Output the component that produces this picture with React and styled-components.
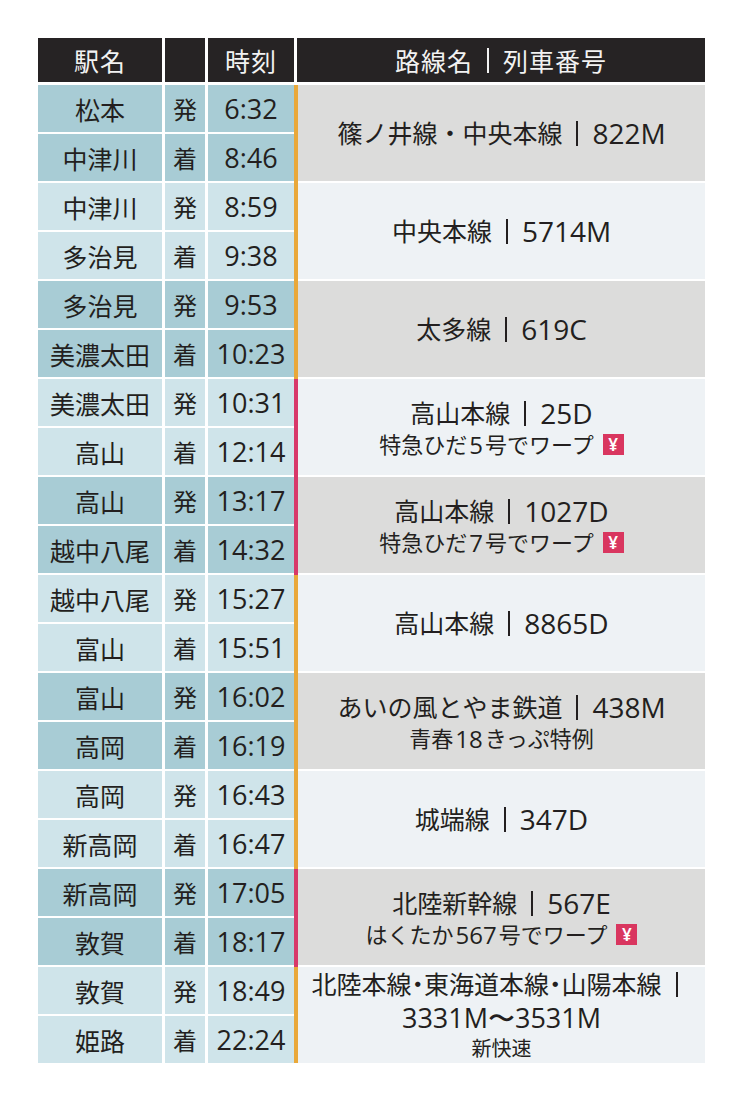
import React from 'react';
import styled, { createGlobalStyle } from 'styled-components';

const GlobalStyle = createGlobalStyle`
  html, body {
    margin: 0;
    padding: 0;
    background: #ffffff;
  }
  body {
    font-family: "Open Sans", "Noto Sans CJK JP", sans-serif;
    color: #231f20;
  }
`;

const darkTeal = '#a8ccd5';
const lightTeal = '#cfe4ea';
const greyRoute = '#dcdcdb';
const lightRoute = '#eef2f5';
const orange = '#e9a83a';
const red = '#d8386a';

const Page = styled.div`
  width: 667px;
  padding: 38px 0 0 38px;
`;

const HeaderRow = styled.div`
  display: grid;
  grid-template-columns: 124px 40px 86px 1fr;
  column-gap: 3px;
  height: 44px;
  margin-bottom: 3px;
`;

const HeaderCell = styled.div`
  background: #262324;
  color: #f2f2f2;
  font-family: "Noto Sans CJK JP", sans-serif;
  font-size: 25px;
  display: flex;
  align-items: center;
  justify-content: center;
  letter-spacing: 1px;
`;

const Group = styled.div`
  display: flex;
`;

const Stops = styled.div`
  display: grid;
  grid-template-columns: 124px 40px 86px;
  grid-template-rows: 47px 47px;
  gap: 2px 3px;
  padding-bottom: ${(p) => (p.$last ? '0' : '2px')};
  flex: none;
`;

const StopCell = styled.div`
  background: ${(p) => (p.$dark ? darkTeal : lightTeal)};
  display: flex;
  align-items: center;
  justify-content: center;
  font-family: ${(p) => (p.$time ? '"Open Sans", "Noto Sans CJK JP", sans-serif' : '"Noto Sans CJK JP", sans-serif')};
  font-size: ${(p) => p.$size || 25}px;
  white-space: nowrap;
`;

const RouteCell = styled.div`
  flex: 1;
  border-left: 4px solid ${(p) => p.$bar};
  padding-bottom: ${(p) => (p.$last ? '0' : '2px')};
  display: flex;
`;

const RouteBody = styled.div`
  flex: 1;
  background: ${(p) => (p.$dark ? greyRoute : lightRoute)};
  display: flex;
  flex-direction: column;
  align-items: center;
  justify-content: center;
  padding-top: ${(p) => p.$shift || 0}px;
`;

const MainLine = styled.div`
  font-size: 25px;
  line-height: ${(p) => p.$lh || 31}px;
  white-space: nowrap;
  display: flex;
  align-items: center;
  font-feature-settings: ${(p) => (p.$palt ? '"palt"' : 'normal')};
`;

const Num = styled.span`
  font-family: "Open Sans", sans-serif;
  font-size: ${(p) => p.$size || 28}px;
`;

const SubLine = styled.div`
  font-size: ${(p) => p.$size || 22}px;
  line-height: ${(p) => p.$lh || 31}px;
  white-space: nowrap;
  display: flex;
  align-items: center;
`;

const SubNum = styled.span`
  font-family: "Open Sans", sans-serif;
  font-size: 24px;
  margin: 0 2px;
`;

const Sep = styled.span`
  display: inline-block;
  width: 2px;
  height: 25px;
  margin: 0 14px;
  background: currentColor;
`;

const Yen = styled.span`
  display: inline-flex;
  align-items: center;
  justify-content: center;
  width: 21px;
  height: 21px;
  margin-left: 9px;
  background: #d9365f;
  color: #ffffff;
  font-family: "Noto Sans", sans-serif;
  font-size: 17px;
  font-weight: 600;
  line-height: 1;
`;

const groups = [
  { stops: [['松本', '発', '6:32'], ['中津川', '着', '8:46']], line: '篠ノ井線・中央本線', no: '822M', bar: orange },
  { stops: [['中津川', '発', '8:59'], ['多治見', '着', '9:38']], line: '中央本線', no: '5714M', bar: orange },
  { stops: [['多治見', '発', '9:53'], ['美濃太田', '着', '10:23']], line: '太多線', no: '619C', bar: orange },
  { stops: [['美濃太田', '発', '10:31'], ['高山', '着', '12:14']], line: '高山本線', no: '25D', sub: ['特急ひだ', '5', '号でワープ'], yen: true, bar: red },
  { stops: [['高山', '発', '13:17'], ['越中八尾', '着', '14:32']], line: '高山本線', no: '1027D', sub: ['特急ひだ', '7', '号でワープ'], yen: true, bar: red },
  { stops: [['越中八尾', '発', '15:27'], ['富山', '着', '15:51']], line: '高山本線', no: '8865D', bar: orange },
  { stops: [['富山', '発', '16:02'], ['高岡', '着', '16:19']], line: 'あいの風とやま鉄道', no: '438M', sub: ['青春', '18', 'きっぷ特例'], bar: orange },
  { stops: [['高岡', '発', '16:43'], ['新高岡', '着', '16:47']], line: '城端線', no: '347D', bar: orange },
  { stops: [['新高岡', '発', '17:05'], ['敦賀', '着', '18:17']], line: '北陸新幹線', no: '567E', sub: ['はくたか', '567', '号でワープ'], yen: true, bar: red },
];

const Route = ({ g }) => (
  <>
    <MainLine>
      {g.line}<Sep /><Num>{g.no}</Num>
    </MainLine>
    {g.sub ? (
      <SubLine>
        {g.sub[0]}<SubNum>{g.sub[1]}</SubNum>{g.sub[2]}
        {g.yen ? <Yen>¥</Yen> : null}
      </SubLine>
    ) : null}
  </>
);

const App = () => {
  return <>
    <GlobalStyle />
    <Page>
      <HeaderRow>
        <HeaderCell>駅名</HeaderCell>
        <HeaderCell />
        <HeaderCell>時刻</HeaderCell>
        <HeaderCell>路線名<Sep />列車番号</HeaderCell>
      </HeaderRow>
      {groups.map((g, i) => {
        const dark = i % 2 === 0;
        return <Group key={i}>
          <Stops>
            {g.stops.map((s) => (
              <React.Fragment key={s[0] + s[2]}>
                <StopCell $dark={dark}>{s[0]}</StopCell>
                <StopCell $dark={dark} $size={24}>{s[1]}</StopCell>
                <StopCell $dark={dark} $size={27} $time>{s[2]}</StopCell>
              </React.Fragment>
            ))}
          </Stops>
          <RouteCell $bar={g.bar}>
            <RouteBody $dark={dark} $shift={g.sub ? 4 : 0}>
              <Route g={g} />
            </RouteBody>
          </RouteCell>
        </Group>;
      })}
      <Group>
        <Stops $last>
          <StopCell>敦賀</StopCell>
          <StopCell $size={24}>発</StopCell>
          <StopCell $size={27} $time>18:49</StopCell>
          <StopCell>姫路</StopCell>
          <StopCell $size={24}>着</StopCell>
          <StopCell $size={27} $time>22:24</StopCell>
        </Stops>
        <RouteCell $bar={orange} $last>
          <RouteBody>
            <MainLine $lh={34} $palt>北陸本線・東海道本線・山陽本線<Sep /></MainLine>
            <MainLine $lh={34}><Num $size={27}>3331M〜3531M</Num></MainLine>
            <SubLine $size={20} $lh={28}>新快速</SubLine>
          </RouteBody>
        </RouteCell>
      </Group>
    </Page>
  </>;
};

export default App;
